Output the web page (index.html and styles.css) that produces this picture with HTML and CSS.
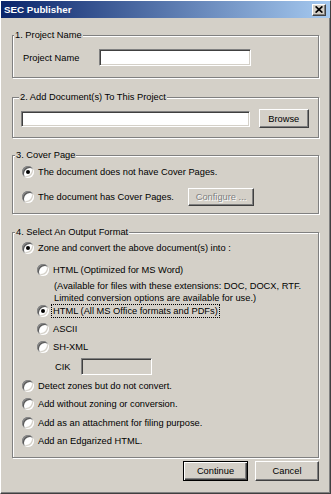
FILE: index.html
```html
<!DOCTYPE html>
<html>
<head>
<meta charset="utf-8">
<link rel="stylesheet" href="styles.css">
</head>
<body>
<div class="window">
  <div class="titlebar">
    <span class="title">SEC Publisher</span>
    <span class="close"><svg width="8" height="7" viewBox="0 0 8 7"><path d="M0.6 0.4 L7.4 6.6 M7.4 0.4 L0.6 6.6" stroke="#000" stroke-width="1.7" fill="none"/></svg></span>
  </div>
  <div class="content">
    <fieldset class="group g1">
      <legend class="lg1">1. Project Name</legend>
      <div class="field-row">
        <span class="lbl">Project Name</span>
        <span class="input name-input"></span>
      </div>
    </fieldset>

    <fieldset class="group g2">
      <legend class="lg2">2. Add Document(s) To This Project</legend>
      <div class="doc-row">
        <span class="input doc-input"></span>
        <span class="btn browse">Browse</span>
      </div>
    </fieldset>

    <fieldset class="group g3">
      <legend class="lg3">3. Cover Page</legend>
      <div class="opt"><span class="radio checked"></span><span>The document does not have Cover Pages.</span></div>
      <div class="opt opt-btn"><span class="radio"></span><span class="cover-lbl">The document has Cover Pages.</span><span class="btn configure">Configure ...</span></div>
    </fieldset>

    <fieldset class="group g4">
      <legend class="lg3">4. Select An Output Format</legend>
      <div class="opt"><span class="radio checked"></span><span>Zone and convert the above document(s) into :</span></div>
      <div class="opt sub mt8"><span class="radio"></span><span>HTML (Optimized for MS Word)</span></div>
      <div class="note">(Available for files with these extensions: DOC, DOCX, RTF.<br>Limited conversion options are available for use.)</div>
      <div class="opt sub"><span class="radio checked"></span><span class="focus">HTML (All MS Office formats and PDFs)</span></div>
      <div class="opt sub mt4"><span class="radio"></span><span>ASCII</span></div>
      <div class="opt sub mt4"><span class="radio"></span><span>SH-XML</span></div>
      <div class="cik-row mt4"><span class="cik-lbl">CIK</span><span class="input cik-input"></span></div>
      <div class="opt mt4"><span class="radio"></span><span>Detect zones but do not convert.</span></div>
      <div class="opt mt4"><span class="radio"></span><span>Add without zoning or conversion.</span></div>
      <div class="opt mt5"><span class="radio"></span><span>Add as an attachment for filing purpose.</span></div>
      <div class="opt mt4"><span class="radio"></span><span>Add an Edgarized HTML.</span></div>
    </fieldset>

    <div class="actions">
      <span class="btn default continue">Continue</span>
      <span class="btn cancel">Cancel</span>
    </div>
  </div>
</div>
</body>
</html>
```

FILE: styles.css
```css
* { box-sizing: border-box; }
html, body { margin: 0; padding: 0; }
body {
  background: #d4d0c8;
  font-family: "Liberation Sans", Arial, sans-serif;
  font-size: 9.3px;
  color: #000;
}
.window {
  width: 331px;
  height: 494px;
  background: #d4d0c8;
  border: 1px solid;
  border-color: #fff #404040 #404040 #fff;
  box-shadow: inset -1px -1px #808080, inset 1px 1px #d4d0c8;
  display: flex;
  flex-direction: column;
}
.titlebar {
  height: 17px;
  display: flex;
  align-items: center;
  justify-content: space-between;
  padding: 0 4px 0 3px;
  background: linear-gradient(to right, #0a246a, #a6caf0);
  color: #fff;
  font-weight: bold;
  font-size: 9.8px;
}
.close {
  width: 14px;
  height: 12px;
  background: #d4d0c8;
  border: 1px solid;
  border-color: #fff #404040 #404040 #fff;
  box-shadow: inset -1px -1px #808080;
  display: flex;
  align-items: center;
  justify-content: center;
}
.content { padding: 11px 11px 0 11px; }

.group {
  margin: 0;
  padding: 0 9px;
  border: 1px solid #808080;
  box-shadow: inset 1px 1px #fff, 1px 1px #fff;
  min-width: 0;
}
.group legend {
  padding: 0 1px;
  height: 12px;
  line-height: 12px;
  background: #d4d0c8;
}
.lg1 { margin-left: -8px; }
.lg2 { margin-left: -3px; }
.lg3 { margin-left: -7px; }

.g1 { padding-top: 8px; padding-bottom: 11px; }
.g2 { margin-top: 13px; padding-top: 6px; padding-bottom: 9px; }
.g3 { margin-top: 11px; padding-top: 4px; padding-bottom: 7px; }
.g4 { margin-top: 12px; padding-top: 3px; padding-bottom: 9px; }

.input {
  display: block;
  background: #fff;
  border: 1px solid;
  border-color: #808080 #fff #fff #808080;
  box-shadow: inset 1px 1px #404040, inset -1px -1px #d4d0c8;
}
.field-row { display: flex; align-items: center; height: 17px; }
.lbl { width: 77px; padding-left: 1px; }
.name-input { width: 152px; height: 17px; }

.doc-row { display: flex; align-items: center; height: 19px; }
.doc-input { width: 231px; height: 16px; margin-left: -1px; }

.btn {
  display: flex;
  align-items: center;
  justify-content: center;
  background: #d4d0c8;
  border: 1px solid;
  border-color: #fff #404040 #404040 #fff;
  box-shadow: inset -1px -1px #808080;
}
.browse { width: 51px; height: 19px; margin-left: 9px; }
.configure {
  width: 66px;
  height: 18px;
  color: #808080;
  text-shadow: 1px 1px #fff;
}
.default {
  border: 1px solid #000;
  box-shadow: inset 1px 1px #fff, inset -1px -1px #404040, inset -2px -2px #808080;
}

.opt { display: flex; align-items: center; height: 14px; gap: 4px; }
.opt-btn { height: 18px; margin-top: 9px; }
.cover-lbl { width: 146px; }
.sub { margin-left: 15px; }
.mt4 { margin-top: 4px; }
.mt5 { margin-top: 5px; }
.mt8 { margin-top: 8px; }

.radio {
  position: relative;
  flex: none;
  width: 12px;
  height: 12px;
  border-radius: 50%;
  background: #fff;
  box-shadow: inset 1px 1px #8a8a8a, inset -1px -1px #fff, inset 2px 2px #5a5a5a, inset -2px -2px #d4d0c8;
}
.radio.checked::after {
  content: "";
  position: absolute;
  left: 4px;
  top: 4px;
  width: 4px;
  height: 4px;
  border-radius: 50%;
  background: #000;
}
.note { margin: 3px 0 0 32px; line-height: 12px; }
.focus { outline: 1px dotted #000; padding: 0 1px; margin-left: -1px; line-height: 12px; }

.cik-row { display: flex; align-items: center; height: 17px; margin-left: 33px; }
.cik-lbl { width: 26px; }
.cik-input { width: 71px; height: 17px; background: #d4d0c8; }

.actions { display: flex; justify-content: flex-end; gap: 7px; margin-top: 3px; }
.continue { width: 65px; height: 20px; }
.cancel { width: 64px; height: 20px; }
```
